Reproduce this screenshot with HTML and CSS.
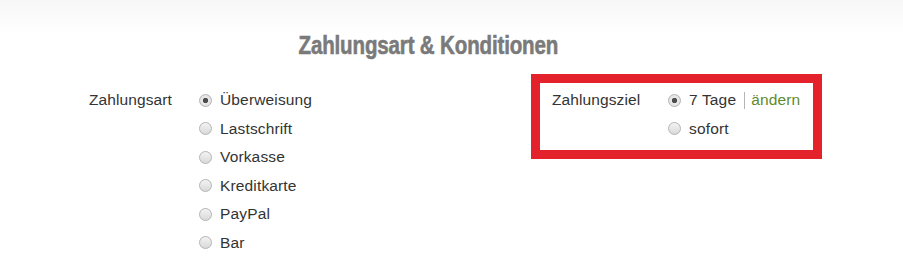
FILE: index.html
```html
<!DOCTYPE html>
<html lang="de">
<head>
<meta charset="utf-8">
<title>Zahlungsart &amp; Konditionen</title>
<link rel="stylesheet" href="styles.css">
</head>
<body>
<div class="page">
  <div class="heading"><h1 class="title">Zahlungsart &amp; Konditionen</h1></div>
  <div class="form">
    <div class="group">
      <div class="label">Zahlungsart</div>
      <ul class="options">
        <li><span class="radio checked"></span>Überweisung</li>
        <li><span class="radio"></span>Lastschrift</li>
        <li><span class="radio"></span>Vorkasse</li>
        <li><span class="radio"></span>Kreditkarte</li>
        <li><span class="radio"></span>PayPal</li>
        <li><span class="radio"></span>Bar</li>
      </ul>
    </div>
    <div class="group highlight">
      <div class="label label-ziel">Zahlungsziel</div>
      <ul class="options">
        <li><span class="radio checked"></span>7 Tage<span class="sep"></span><a class="change" href="#">ändern</a></li>
        <li><span class="radio"></span>sofort</li>
      </ul>
    </div>
  </div>
</div>
</body>
</html>
```
FILE: styles.css
```css
html, body {
  margin: 0;
  padding: 0;
  background: #ffffff;
}
body {
  font-family: "Liberation Sans", Arial, sans-serif;
  color: #333333;
}
.page {
  width: 903px;
  height: 270px;
  background: linear-gradient(to bottom, #f7f7f7 0px, #ffffff 34px);
  overflow: hidden;
}
.heading {
  margin-right: 46px;
  padding-top: 30px;
  height: 44px;
  text-align: center;
}
.title {
  display: inline-block;
  margin: 0;
  font-family: "Liberation Sans", Arial, sans-serif;
  font-weight: bold;
  font-size: 26px;
  line-height: 30px;
  color: #7a7a7a;
  letter-spacing: -0.2px;
  -webkit-text-stroke: 0.6px #7a7a7a;
  transform: scaleX(0.79);
  transform-origin: center;
}
.form {
  display: flex;
  align-items: flex-start;
  padding-left: 89px;
  padding-right: 81px;
}
.group {
  display: flex;
  align-items: flex-start;
}
.label {
  width: 110px;
  font-size: 15.5px;
  line-height: 28.5px;
  padding-top: 12px;
  letter-spacing: 0.1px;
}
.options {
  list-style: none;
  margin: 0;
  padding: 12px 0 0 0;
}
.options li {
  display: flex;
  align-items: center;
  height: 28.5px;
  font-size: 15.5px;
  letter-spacing: 0.15px;
}
.radio {
  width: 11px;
  height: 11px;
  border-radius: 50%;
  border: 1px solid #b4b4b4;
  background: linear-gradient(to bottom, #f3f3f3, #d9d9d9);
  margin-right: 8px;
  flex: none;
}
.radio.checked {
  background: radial-gradient(circle, #4d4d4d 0, #4d4d4d 2.3px, #e9e9e9 3px, #dcdcdc 100%);
}
.highlight {
  margin-left: auto;
  border: 9px solid #e3222b;
  width: 261px;
  height: 64px;
  padding: 3px 0 0 12px;
  box-sizing: content-box;
}
.highlight .label,
.highlight .options {
  padding-top: 0;
}
.highlight .label-ziel {
  width: 116px;
}
.sep {
  width: 1px;
  height: 17px;
  background: #b5b5b5;
  margin: 0 6px 0 8px;
}
.change {
  color: #5e8a2e;
  text-decoration: none;
}
```
